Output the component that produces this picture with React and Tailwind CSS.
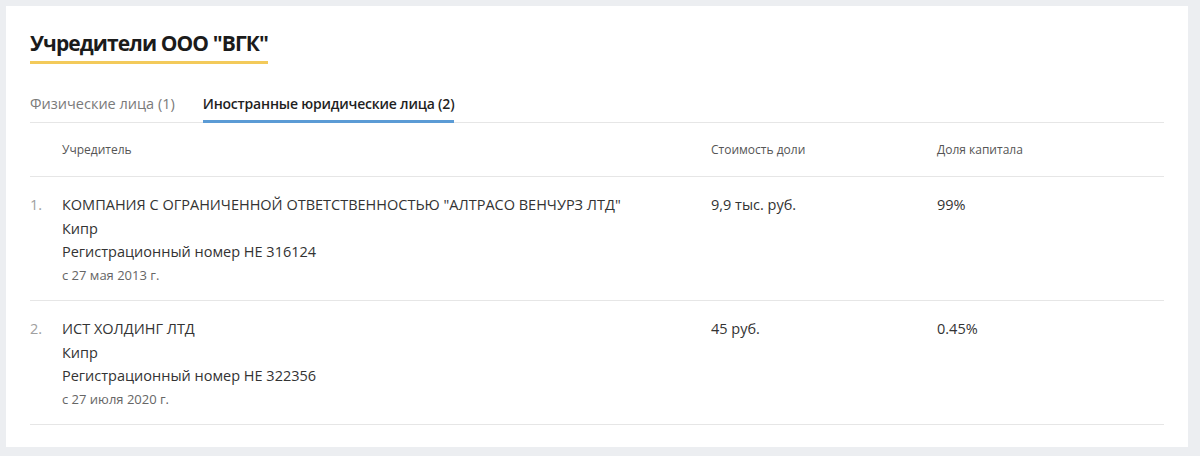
import React from "react";

const founders = [
  {
    n: "1.",
    name: 'КОМПАНИЯ С ОГРАНИЧЕННОЙ ОТВЕТСТВЕННОСТЬЮ "АЛТРАСО ВЕНЧУРЗ ЛТД"',
    country: "Кипр",
    reg: "Регистрационный номер НЕ 316124",
    since: "с 27 мая 2013 г.",
    cost: "9,9 тыс. руб.",
    share: "99%",
  },
  {
    n: "2.",
    name: "ИСТ ХОЛДИНГ ЛТД",
    country: "Кипр",
    reg: "Регистрационный номер НЕ 322356",
    since: "с 27 июля 2020 г.",
    cost: "45 руб.",
    share: "0.45%",
  },
];

export default function App() {
  return (
    <div
      className="h-[456px] w-[1200px] bg-[#eceef1] pl-[6px] pt-[6px]"
      style={{ fontFamily: '"Open Sans", "Noto Sans", sans-serif' }}
    >
      <div className="h-[441px] w-[1182px] bg-white px-6 pt-[22px]">
        {/* Title */}
        <div className="inline-block border-b-[3px] border-[#f3ca5a] pb-[3px]">
          <h2 className="text-[21px] font-bold leading-[30px] tracking-[-0.9px] text-[#1b1b1b]">
            Учредители ООО "ВГК"
          </h2>
        </div>

        {/* Tabs */}
        <div className="mt-[29px] flex gap-[28px] border-b border-[#e6e6e6] text-[14.5px]">
          <div className="pb-[7px] leading-[22px] text-[#7a7a7a]">Физические лица (1)</div>
          <div className="-mb-px border-b-[3px] border-[#5b9bd5] pb-[4px] text-[14px] font-semibold leading-[22px] tracking-[-0.2px] text-[#1f1f1f]">
            Иностранные юридические лица (2)
          </div>
        </div>

        {/* Header */}
        <div className="grid h-[54px] grid-cols-[32px_649px_226px_1fr] items-center border-b border-[#e6e6e6] text-[12px] text-[#555]">
          <div />
          <div>Учредитель</div>
          <div>Стоимость доли</div>
          <div>Доля капитала</div>
        </div>

        {/* Rows */}
        {founders.map((f) => (
          <div
            key={f.n}
            className="grid h-[124px] grid-cols-[32px_649px_226px_1fr] border-b border-[#e6e6e6] pt-[16px] text-[14.5px] leading-[23.5px] text-[#333]"
          >
            <div className="text-[#a0a0a0]">{f.n}</div>
            <div className="flex flex-col">
              <span>{f.name}</span>
              <span>{f.country}</span>
              <span>{f.reg}</span>
              <span className="text-[13px] leading-[22px] text-[#666]">{f.since}</span>
            </div>
            <div>{f.cost}</div>
            <div>{f.share}</div>
          </div>
        ))}
      </div>
    </div>
  );
}
